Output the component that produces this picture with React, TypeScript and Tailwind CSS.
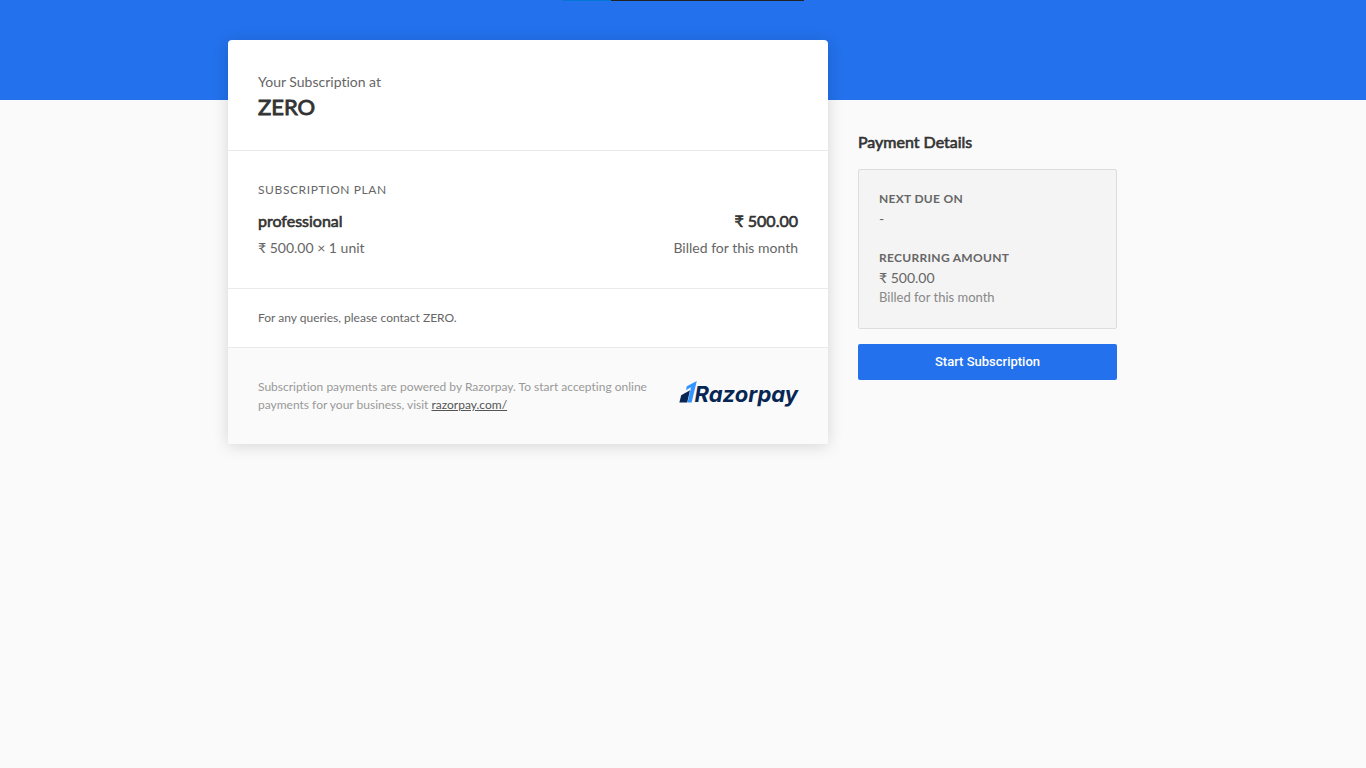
import React from 'react';

function RazorpayLogo() {
  return (
    <div className="flex shrink-0 items-end pb-1 text-[#072654]" role="img" aria-label="Razorpay">
      <svg className="mb-[5px] h-[22px] w-[18px]" viewBox="0 0 18 22" aria-hidden="true">
        <path d="M7.800 5.200 7 9.200 12 6.200 8.600 21.500h4L17.800 0Z" fill="#3395ff" />
        <path d="M2.200 14.300 0.400 21.500h7.800L11 9.200Z" fill="#072654" />
      </svg>
      <span className="-ml-[2px] font-['Inter'] text-[22px] leading-7 font-bold italic">Razorpay</span>
    </div>
  );
}

function SubscriptionCard() {
  return (
    <section className="w-full max-w-[600px] overflow-hidden rounded-t-[4px] bg-white shadow-[0_2px_16px_rgba(0,0,0,0.15)]">
      <header className="border-b border-[#eaeaea] px-[30px] pt-8 pb-7">
        <p className="text-sm leading-5">Your Subscription at</p>
        <h1 className="text-[22px] leading-[30px] text-[#333] [-webkit-text-stroke:0.04em]">ZERO</h1>
      </header>
      <div className="border-b border-[#eaeaea] px-[30px] py-[30px]">
        <h2 className="text-xs leading-[18px] tracking-wider uppercase">Subscription Plan</h2>
        <div className="mt-3 flex justify-between text-base leading-5 text-[#333] [-webkit-text-stroke:0.04em]">
          <span>professional</span>
          <span>₹ 500.00</span>
        </div>
        <div className="mt-[7px] flex justify-between text-sm leading-5">
          <span>₹ 500.00 × 1 unit</span>
          <span>Billed for this month</span>
        </div>
      </div>
      <p className="border-b border-[#eaeaea] px-[30px] py-5 text-xs leading-[18px]">
        For any queries, please contact ZERO.
      </p>
      <footer className="flex items-center justify-between gap-7 bg-[#fafafa] px-[30px] py-[30px]">
        <p className="text-xs leading-[18px] text-[#999]">
          Subscription payments are powered by Razorpay. To start accepting online payments for your business, visit{' '}
          <a href="https://razorpay.com/" className="text-[#555] underline">razorpay.com/</a>
        </p>
        <RazorpayLogo />
      </footer>
    </section>
  );
}

function PaymentDetails() {
  return (
    <aside className="w-full max-w-[259px] pt-[92px]">
      <h2 className="text-base leading-5 text-[#333] [-webkit-text-stroke:0.04em]">Payment Details</h2>
      <dl className="mt-[17px] rounded-[2px] border border-[#ddd] bg-[#f4f4f4] p-5 text-sm leading-[21px]">
        <dt className="text-xs leading-[18px] font-bold tracking-wide uppercase">Next due on</dt>
        <dd>-</dd>
        <dt className="mt-5 text-xs leading-[18px] font-bold tracking-wide uppercase">Recurring amount</dt>
        <dd>₹ 500.00</dd>
        <dd className="text-[13px] leading-[18px] pb-[2px] text-[#888]">Billed for this month</dd>
      </dl>
      <button
        type="button"
        className="mt-[15px] h-9 w-full cursor-pointer rounded-[2px] bg-[#2371ec] font-['Roboto'] text-[13px] font-medium text-white"
      >
        Start Subscription
      </button>
    </aside>
  );
}

export default function App() {
  return (
    <div className="min-h-screen bg-[#fafafa] font-['Lato',sans-serif] text-[#666] [font-variant-ligatures:none]">
      <div className="h-[100px] bg-[#2371ec]">
        <div className="mx-auto flex h-px w-[241px]" aria-hidden="true">
          <span className="w-12 bg-[#0078d4]" />
          <span className="flex-1 bg-[#222]" />
        </div>
      </div>
      <main className="relative mx-auto -mt-[60px] flex max-w-[910px] items-start gap-[30px]">
        <SubscriptionCard />
        <PaymentDetails />
      </main>
    </div>
  );
}
